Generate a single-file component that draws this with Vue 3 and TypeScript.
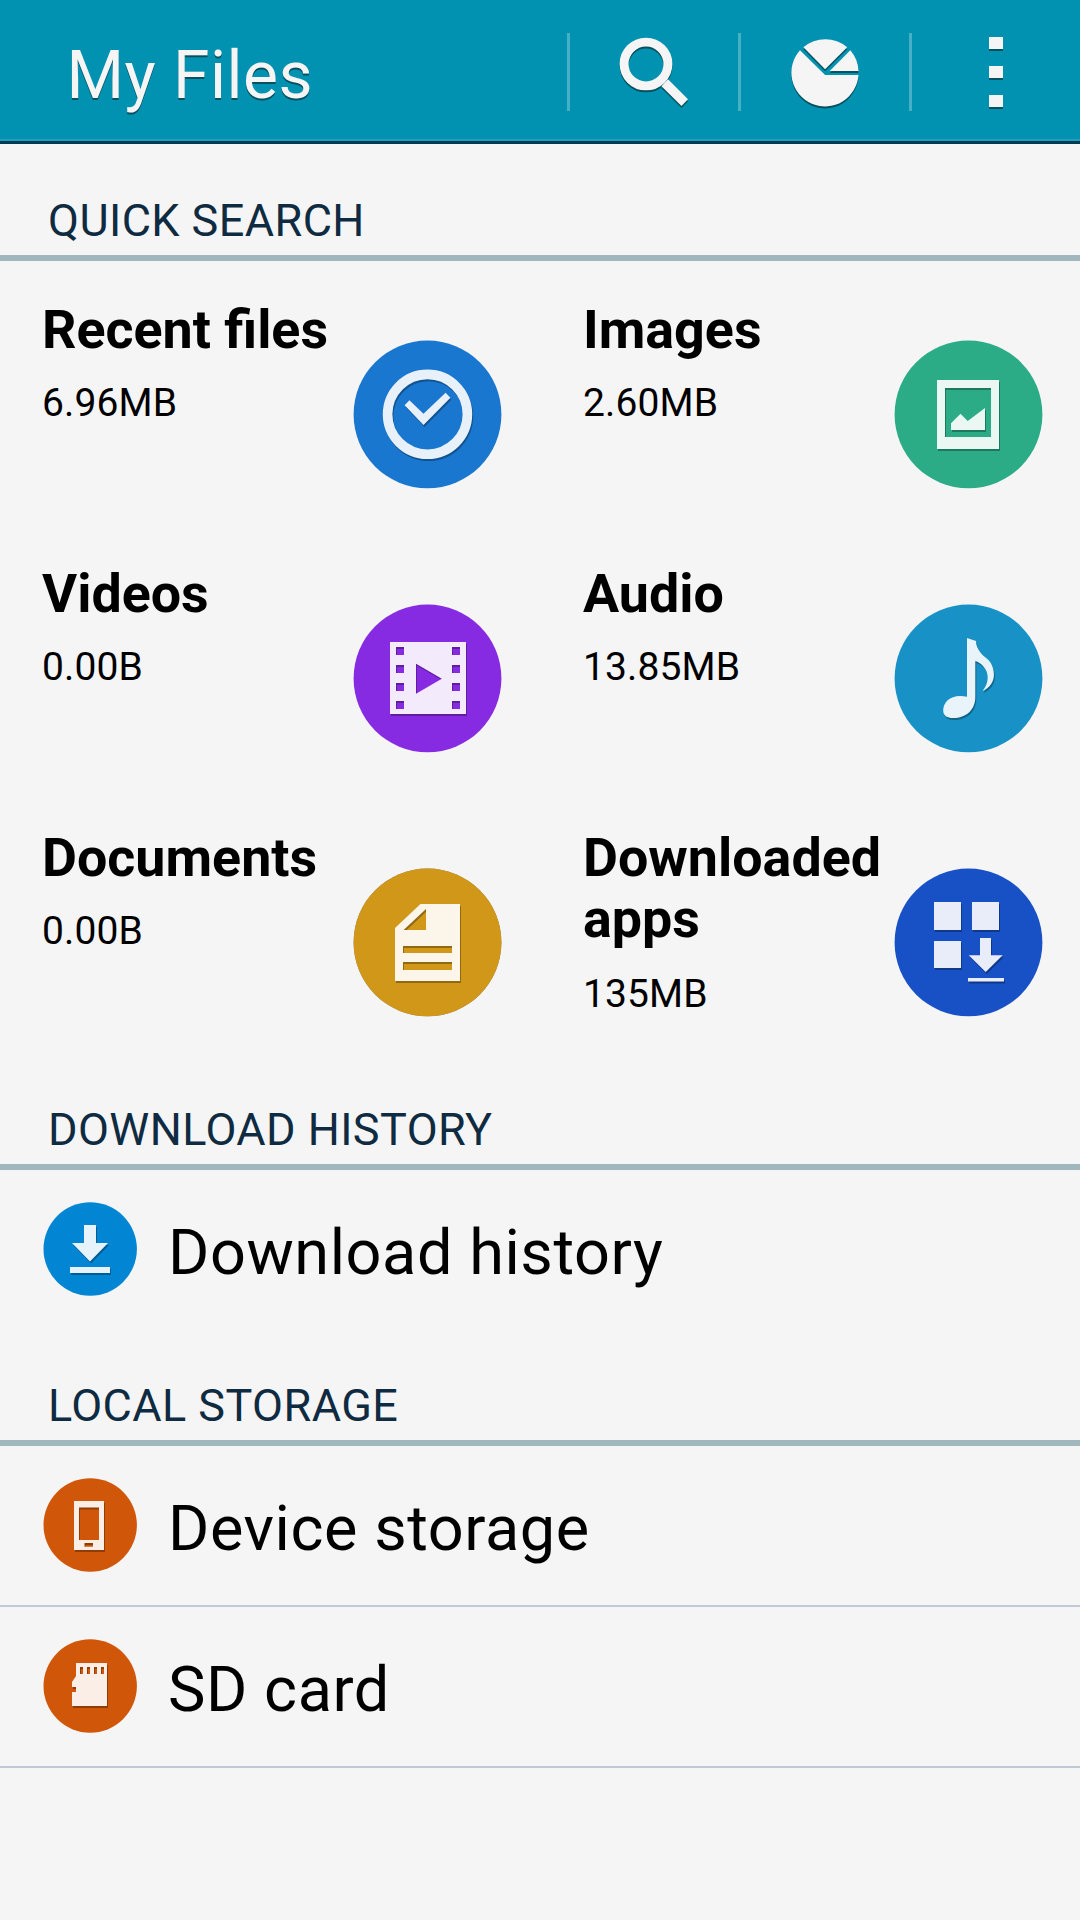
<script setup lang="ts">
interface Category {
  id: string
  title: string
  size: string
  color: string
  tint: string
  tall?: boolean
}

interface Entry {
  id: string
  label: string
  color: string
  tint: string
}

const categories: Category[] = [
  { id: 'recent', title: 'Recent files', size: '6.96MB', color: '#1977cf', tint: '#e8f1fa' },
  { id: 'images', title: 'Images', size: '2.60MB', color: '#2bac86', tint: '#eaf7f3' },
  { id: 'videos', title: 'Videos', size: '0.00B', color: '#872be3', tint: '#f3eafc' },
  { id: 'audio', title: 'Audio', size: '13.85MB', color: '#1892c6', tint: '#e8f4f9' },
  { id: 'documents', title: 'Documents', size: '0.00B', color: '#d19719', tint: '#fcf5e9' },
  { id: 'apps', title: 'Downloaded apps', size: '135MB', color: '#1751c5', tint: '#e8edf9', tall: true },
]

const downloads: Entry[] = [
  { id: 'download', label: 'Download history', color: '#0286d4', tint: '#e6f3fb' },
]

const storages: Entry[] = [
  { id: 'device', label: 'Device storage', color: '#d05709', tint: '#faeee6' },
  { id: 'sd', label: 'SD card', color: '#d05709', tint: '#faeee6' },
]

const perforations: number[] = [44, 62, 80, 98]
</script>

<template>
  <div class="screen">
    <header class="bar">
      <h1 class="bar-title">My Files</h1>
      <button class="action" aria-label="Search">
        <svg class="bar-icon" viewBox="0 0 168 139">
          <circle cx="76" cy="64" r="21.9" fill="none" stroke="#f5f5f5" stroke-width="8.9" />
          <path d="M98 79.3 118 99.3 111.5 106 91.5 86.3Z" fill="#f5f5f5" />
        </svg>
      </button>
      <button class="action" aria-label="Storage usage">
        <svg class="bar-icon" viewBox="0 0 168 139" fill="#f5f5f5">
          <path d="M62.4 47.3A33.8 33.8 0 0 1 106.2 47.3L84.1 69.2Z" />
          <path d="M109.3 50.3A33.8 33.8 0 0 1 117.5 71H88.7Z" />
          <path d="M59 50.3 84.1 75H117.5A33.6 33.6 0 1 1 59 50.3Z" />
        </svg>
      </button>
      <button class="action" aria-label="More options">
        <svg class="bar-icon" viewBox="0 0 168 139" fill="#f5f5f5">
          <path d="M77 37h14v12H77zM77 66h14v12H77zM77 95h14v12H77z" />
        </svg>
      </button>
    </header>

    <main>
      <h2 class="section">QUICK SEARCH</h2>
      <div class="grid">
        <article v-for="c in categories" :key="c.id" class="tile">
          <div class="tile-text">
            <h3 class="tile-title">{{ c.title }}</h3>
            <p class="tile-size" :class="{ tall: c.tall }">{{ c.size }}</p>
          </div>
          <svg class="tile-icon" viewBox="0 0 150 150">
            <circle :class="{ raised: c.id === 'documents' }" cx="75.5" cy="75.4" r="73.9" :fill="c.color" />
            <g class="glyph" :fill="c.tint" fill-rule="evenodd">
              <template v-if="c.id === 'recent'">
                <circle cx="75.5" cy="75.3" r="39.9" fill="none" :stroke="c.tint" stroke-width="9.6" />
                <path d="M52.6 66.3 57.4 61.3 71.5 74.7 93.6 53.7 98.4 58.7 71.5 86Z" />
              </template>
              <template v-else-if="c.id === 'images'">
                <path d="M44 41H106V110H44ZM52 49V98H98V49Z" />
                <path d="M58 84.3 67.5 74.7 74.7 82 92 69V91H58Z" />
              </template>
              <path
                v-else-if="c.id === 'videos'"
                :d="'M38 39H114V111H38ZM64 60.7V90.7L89.8 75.7Z' + perforations.map((y) => `M44 ${y}h8v8h-8zM100 ${y}h8v8h-8z`).join('')"
              />
              <path
                v-else-if="c.id === 'audio'"
                d="M74 35 83 38C83 44 87 50 91.9 54C98 58.5 100.9 64 100.9 72C100.9 79 96.5 85 89.5 88C93 84 94.7 79 94.7 74.5C94.7 67 89.5 60.5 82.3 58V94C82.3 107 73 115 60.2 115C54 115 50.2 112.5 50.2 107.5C50.2 98 59 90.5 74 93.7Z"
              />
              <path
                v-else-if="c.id === 'documents'"
                d="M43 61 68.5 37H108V114H43ZM74 42 51.6 63H74ZM51 79V86H100V79ZM51 95V103H100V95Z"
              />
              <path
                v-else
                d="M41 35h27v28H41zM79 35h27v28H79zM41 74h27v27H41zM87 71H98V88.2H109.7L92.7 105 75.7 88.2H87ZM75 111h36v3.6H75z"
              />
            </g>
          </svg>
        </article>
      </div>

      <h2 class="section">DOWNLOAD HISTORY</h2>
      <div v-for="e in downloads" :key="e.id" class="row plain">
        <svg class="row-icon" viewBox="0 0 96 96">
          <circle cx="48.2" cy="48" r="46.7" :fill="e.color" />
          <path class="glyph" :fill="e.tint" d="M42 24H54V42H66L48 60.5 30 42H42ZM28 66H68V72H28Z" />
        </svg>
        <span class="row-label">{{ e.label }}</span>
      </div>

      <h2 class="section">LOCAL STORAGE</h2>
      <div v-for="e in storages" :key="e.id" class="row">
        <svg class="row-icon" viewBox="0 0 96 96">
          <circle cx="48.2" cy="48" r="46.7" :fill="e.color" />
          <path
            v-if="e.id === 'device'"
            class="glyph"
            :fill="e.tint"
            fill-rule="evenodd"
            d="M32 24H62V73H32ZM37 30.5V63H57V30.5ZM42.5 66V69.7H51V66Z"
          />
          <path
            v-else
            class="glyph"
            :fill="e.tint"
            fill-rule="evenodd"
            d="M34 25H65V68H30V54H34V49H30V44L34 38ZM38 29V36H41V29ZM45 29V36H48V29ZM52 29V36H55V29ZM59 29V36H62V29Z"
          />
        </svg>
        <span class="row-label">{{ e.label }}</span>
      </div>
    </main>
  </div>
</template>

<style>
body {
  background: #f5f5f5;
}
</style>

<style scoped>
.screen {
  width: 1080px;
  height: 1920px;
  overflow: hidden;
  background: #f5f5f5;
  color: #000;
  font-family: Roboto, "Liberation Sans", sans-serif;
}

h1,
h2,
h3,
p {
  margin: 0;
  font-weight: 400;
}

.bar {
  display: flex;
  box-sizing: border-box;
  height: 144px;
  background: #0092b0;
  border-bottom: 3px solid #003a53;
  box-shadow: inset 0 -2px 0 #1f9fb9;
}

.bar-title {
  flex: 1;
  padding: 12px 0 0 66.5px;
  font-size: 66px;
  line-height: 127px;
  letter-spacing: 0.45px;
  color: #f5f5f5;
  text-shadow: 0 2px 0 #06505f;
}

.action {
  display: flex;
  width: 171px;
  padding: 0;
  border: 0;
  background: linear-gradient(#47b0c6, #47b0c6) 0 33px / 3px 78px no-repeat;
}

.bar-icon {
  width: 168px;
  height: 139px;
  margin-left: 3px;
  filter: drop-shadow(0 2px 0 #06505f);
}

.section {
  box-sizing: border-box;
  height: 117px;
  padding: 45px 0 0 48px;
  border-bottom: 6px solid #a0b8bd;
  font-size: 45px;
  line-height: 63px;
  letter-spacing: 0.42px;
  color: #0f2b41;
}

.grid {
  display: grid;
  grid-template-columns: 541px 539px;
  grid-auto-rows: 264px;
}

.tile {
  display: flex;
}

.tile-text {
  width: 310px;
  padding: 38px 0 0 42px;
}

.tile-title {
  font-size: 53.8px;
  line-height: 61px;
  font-weight: 700;
}

.tile-size {
  margin-top: 20px;
  font-size: 39px;
  line-height: 46px;
  letter-spacing: 0.12px;
}

.tile-size.tall {
  margin-top: 22px;
}

.tile-icon {
  flex: none;
  width: 150px;
  height: 150px;
  margin-top: 78px;
  overflow: visible;
}

.glyph {
  filter: drop-shadow(1px 2px 0 rgba(0, 0, 0, 0.3));
}

.raised {
  filter: drop-shadow(0.5px 0.5px 0.5px rgba(0, 0, 0, 0.5));
}

.row {
  display: flex;
  box-sizing: border-box;
  height: 161px;
  padding-left: 42px;
  border-bottom: 2px solid #c0cad4;
}

.row.plain {
  height: 159px;
  border-bottom: 0;
}

.row-icon {
  width: 96px;
  height: 96px;
  margin-top: 31px;
}

.row-label {
  padding: 6px 0 0 30px;
  font-size: 63px;
  line-height: 153px;
  letter-spacing: 0.57px;
}
</style>
